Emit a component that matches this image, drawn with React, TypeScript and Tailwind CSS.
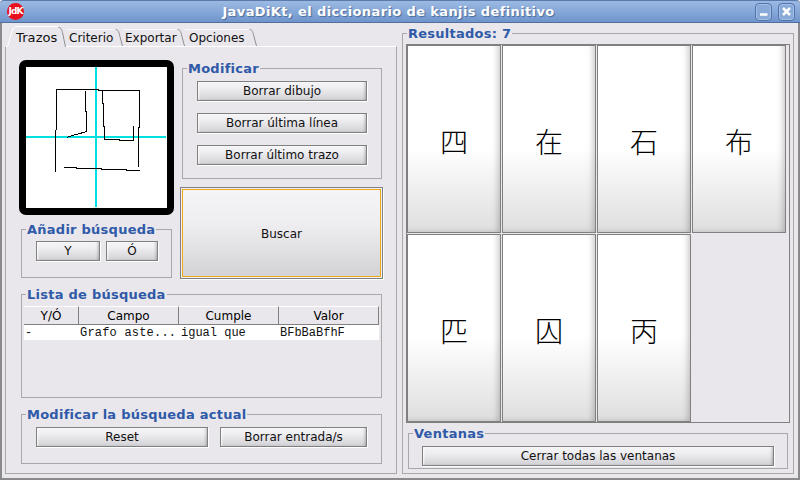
import React from "react";

const dejavu = "font-['DejaVu_Sans',sans-serif]";

function Btn({ className, children }: { className: string; children: React.ReactNode }) {
  return (
    <button className={`flex items-center justify-center border border-[#808080] bg-[linear-gradient(#f5f4f7,#eeedf0_35%,#d2d1d5)] text-[12px] leading-none text-[#111] shadow-[1px_1px_0_#fff,inset_-3px_-1px_3px_-2px_rgba(0,0,0,0.25),inset_2px_1px_2px_-1px_rgba(255,255,255,0.9)] ${className}`}>
      {children}
    </button>
  );
}

function Group({ title, className, children }: { title: string; className: string; children?: React.ReactNode }) {
  return (
    <fieldset className={`border border-[#a8a8ab] ${className}`}>
      <legend className="ml-[4px] h-[15px] px-px text-[13px] leading-[15px] font-bold tracking-[0.25px] text-[#2f5aa8]">{title}</legend>
      {children}
    </fieldset>
  );
}

function Slant({ w = 8, active = false }: { w?: number; active?: boolean }) {
  return (
    <svg width={w} height={active ? 20 : 17} viewBox={`0 0 ${w} ${active ? 20 : 17}`} className="block shrink-0">
      <path d={`M0.5 0.5 C${w * 0.4} 0.5 ${w * 0.5} 3 ${w * 0.6} 7 L${w - 0.5} ${active ? 20 : 17}`} fill="none" stroke="#8f8f92" />
    </svg>
  );
}

function Tabs() {
  return (
    <div className="flex h-[20px] items-end pl-[2px] text-[12px] text-[#111]">
      <div className="relative z-10 -mb-px flex h-[21px] items-start bg-[#e9e7ec]">
        <svg width="8" height="21" viewBox="0 0 8 21" className="block shrink-0">
          <path d="M0.5 21 L5 5 Q6 1.5 7.5 1.5" fill="none" stroke="#ffffff" />
        </svg>
        <span className="h-[20px] w-[43px] border-t border-white pt-[3px] pl-[1px] text-[13px] leading-[16px] tracking-[0.1px]">Trazos</span>
        <div className="pt-[1px]"><Slant w={8} active /></div>
      </div>
      <div className="flex h-[17px] items-start">
        <span className="h-[17px] w-[49px] border-t border-[#f8f8f8] pt-px pl-[3px] leading-[15px]">Criterio</span>
        <Slant />
      </div>
      <div className="flex h-[17px] items-start">
        <span className="h-[17px] w-[54px] border-t border-[#f8f8f8] pt-px pl-[2px] leading-[15px]">Exportar</span>
        <Slant />
      </div>
      <div className="flex h-[17px] items-start">
        <span className="h-[17px] w-[64px] border-t border-[#f8f8f8] pt-px pl-[4px] leading-[15px]">Opciones</span>
        <Slant />
      </div>
    </div>
  );
}

function Canvas() {
  return (
    <div className="h-[155px] w-[155px] rounded-[7px] border-[7px] border-black bg-white">
      <svg width="141" height="141" viewBox="48 36 423 423" className="block" shapeRendering="crispEdges">
        <path d="M258 36V456" stroke="#00e0e0" strokeWidth="6" />
        <path d="M48 245H468" stroke="#00e0e0" strokeWidth="6" />
        <g fill="none" stroke="#000" strokeWidth="3">
          <path d="M140 225V103H265V106H388V218H385V335" />
          <path d="M226 108V168H229V230L200 238L170 247" />
          <path d="M277 106V145H280V215H284V253H327V256H370V213" />
          <path d="M136 225V350" />
          <path d="M162 337H200V340H275V343H350V346H390" />
        </g>
      </svg>
    </div>
  );
}

function Table() {
  const head = "flex h-[19px] items-center justify-center border-b border-r border-t border-b-[#808080] border-r-[#808080] border-t-white text-[12px] leading-none";
  const cell = "h-[15px] bg-white pl-[1px] font-['Liberation_Mono',monospace] text-[12px] leading-[17px] whitespace-nowrap text-[#111]";
  return (
    <div className="mx-[2px] mt-[4px] grid w-[355px] grid-cols-[55px_100px_100px_100px]">
      <div className={head}>Y/Ó</div>
      <div className={head}>Campo</div>
      <div className={head}>Cumple</div>
      <div className={head}>Valor</div>
      <div className={cell}>-</div>
      <div className={`${cell} tracking-[0.2px]`}>Grafo aste...</div>
      <div className={`${cell} pl-[2px]`}>igual que</div>
      <div className={cell}>BFbBaBfhF</div>
    </div>
  );
}

function Kanji({ c }: { c: string }) {
  return (
    <button className="flex h-[188px] w-[94px] items-center justify-center border border-[#808080] bg-[linear-gradient(#ffffff,#ffffff_55%,#dedede)] pt-[4px] font-['Noto_Sans_CJK_JP',sans-serif] text-[28px] leading-none font-light text-black shadow-[inset_-5px_-2px_6px_-3px_rgba(0,0,0,0.22)]">
      {c}
    </button>
  );
}

export default function App() {
  return (
    <div className={`flex h-[480px] w-[800px] flex-col overflow-hidden bg-[#e9e7ec] ${dejavu}`}>
      <header className="flex h-[23px] shrink-0 items-center rounded-t-[4px] border-t border-b border-t-[#5a7aac] border-b-[#4f6f9f] bg-[linear-gradient(#9bb9e2,#86a8d8_50%,#7094cb)] pr-[5px] pl-[7px]">
        <div className="flex h-[17px] w-[17px] shrink-0 items-center justify-center rounded-full bg-[#e8101c] text-[9px] leading-none font-bold tracking-[-1px] text-white">JdK</div>
        <div className="flex-1 pr-[2px] text-center text-[13px] leading-none font-bold tracking-[0.38px] text-white [text-shadow:1px_1px_1px_#4a6a9c]">
          JavaDiKt, el diccionario de kanjis definitivo
        </div>
        <div className="flex gap-[6px]">
          <div className="flex h-[18px] w-[17px] items-center justify-center rounded-[4px] border border-[#4f74ad] bg-[#89a9d8] shadow-[inset_0_0_0_1px_#a4bfe5]">
            <svg width="11" height="11" viewBox="0 0 11 11"><path d="M2 8.5H9.5" stroke="#fff" strokeWidth="2.5" /></svg>
          </div>
          <div className="flex h-[18px] w-[17px] items-center justify-center rounded-[4px] border border-[#4f74ad] bg-[#89a9d8] shadow-[inset_0_0_0_1px_#a4bfe5]">
            <svg width="11" height="11" viewBox="0 0 11 11"><path d="M2 2L9 9M9 2L2 9" stroke="#fff" strokeWidth="2.6" /></svg>
          </div>
        </div>
      </header>

      <main className="flex flex-1 border-x-2 border-b-2 border-x-[#8a8a8c] border-b-[#8a8a8c] pt-[1px] pr-[4px] pl-[3px]">
        <section className="w-[392px] shrink-0 pt-[2px]">
          <Tabs />
          <div className="h-[428px] border border-[#a8a8ab] border-t-white pt-[13px] pl-[13px]">
            <div className="flex">
              <div className="w-[155px]">
                <Canvas />
                <Group title="Añadir búsqueda" className="mt-[7px] ml-[2px] h-[56px] w-[151px]">
                  <div className="flex gap-[6px] pt-[4px] pl-[14px]">
                    <Btn className="h-[20px] w-[64px]">Y</Btn>
                    <Btn className="h-[20px] w-[52px]">Ó</Btn>
                  </div>
                </Group>
              </div>
              <div className="ml-[6px] w-[203px] pt-px">
                <Group title="Modificar" className="ml-[2px] h-[118px] w-[200px]">
                  <div className="flex flex-col gap-[12px] px-[14px] pt-[5px]">
                    <Btn className="h-[20px] w-[170px]">Borrar dibujo</Btn>
                    <Btn className="h-[20px] w-[170px]">Borrar última línea</Btn>
                    <Btn className="h-[20px] w-[170px]">Borrar último trazo</Btn>
                  </div>
                </Group>
                <button className="mt-[8px] h-[92px] w-[203px] border border-[#808080] bg-[linear-gradient(#f5f4f7,#eeedf0_40%,#d2d1d5)] pt-[2px] text-[12px] text-[#111] shadow-[1px_1px_0_#fff,inset_0_0_0_1px_#f1f0f3,inset_0_0_0_2px_#f0a818]">
                  Buscar
                </button>
              </div>
            </div>
            <Group title="Lista de búsqueda" className="mt-[8px] ml-[2px] h-[111px] w-[361px]">
              <Table />
            </Group>
            <Group title="Modificar la búsqueda actual" className="mt-[9px] ml-[2px] h-[57px] w-[361px]">
              <div className="flex gap-[12px] pt-[5px] pl-[14px]">
                <Btn className="h-[20px] w-[172px]">Reset</Btn>
                <Btn className="h-[20px] w-[147px]">Borrar entrada/s</Btn>
              </div>
            </Group>
          </div>
        </section>

        <Group title="Resultados: 7" className="mt-[2px] ml-[5px] h-[448px] w-[392px]">
          <div className="mx-[3px] mt-[3px] h-[379px] w-[384px] border border-[#808080]">
            <div className="grid grid-cols-[repeat(4,94px)] gap-px">
              {["四", "在", "石", "布", "匹", "囚", "丙"].map((c) => (
                <Kanji key={c} c={c} />
              ))}
            </div>
          </div>
          <Group title="Ventanas" className="mx-[5px] mt-[3px] h-[43px] w-[380px]">
            <div className="pt-[5px] pl-[13px]">
              <Btn className="h-[20px] w-[352px]">Cerrar todas las ventanas</Btn>
            </div>
          </Group>
        </Group>
      </main>
    </div>
  );
}
